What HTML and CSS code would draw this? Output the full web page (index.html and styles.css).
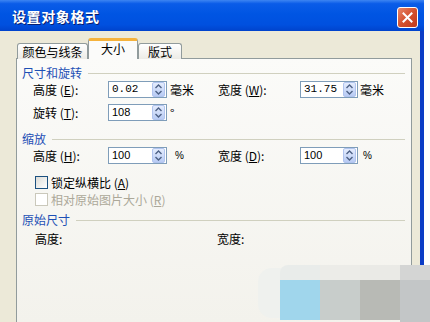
FILE: index.html
```html
<!DOCTYPE html>
<html lang="zh-CN">
<head>
    <meta charset="UTF-8">
    <title>设置对象格式</title>
    <link rel="stylesheet" href="styles.css">
</head>
<body>

    <div class="window">
        <div class="titlebar">
            <span class="title">设置对象格式</span>
            <span class="close">
                <svg width="11" height="11" viewBox="0 0 11 11"><path d="M1.5 1.5 L9.5 9.5 M9.5 1.5 L1.5 9.5" stroke="#fff" stroke-width="2" stroke-linecap="square"/></svg>
            </span>
        </div>

        <div class="content">
            <div class="tabs">
                <div class="tab tab-colors">颜色与线条</div>
                <div class="tab tab-active">大小</div>
                <div class="tab tab-layout">版式</div>
            </div>

            <div class="panel">
                <!-- size and rotation -->
                <div class="group">
                    <span>尺寸和旋转</span><i class="rule"></i>
                </div>
                <div class="row row-first">
                    <span class="lbl">高度 (<u>E</u>):</span>
                    <span class="field"><span class="val mono">0.02</span><span class="spin"><svg width="11" height="13" viewBox="0 0 11 13"><path d="M2.5 5 L5.5 2 L8.5 5 M2.5 8 L5.5 11 L8.5 8" fill="none" stroke="#4d6185" stroke-width="1.4"/></svg></span></span>
                    <span class="unit">毫米</span>
                    <span class="lbl lbl-right">宽度 (<u>W</u>):</span>
                    <span class="field field-right"><span class="val mono">31.75</span><span class="spin"><svg width="11" height="13" viewBox="0 0 11 13"><path d="M2.5 5 L5.5 2 L8.5 5 M2.5 8 L5.5 11 L8.5 8" fill="none" stroke="#4d6185" stroke-width="1.4"/></svg></span></span>
                    <span class="unit unit-right">毫米</span>
                </div>
                <div class="row row-second">
                    <span class="lbl">旋转 (<u>T</u>):</span>
                    <span class="field"><span class="val">108</span><span class="spin"><svg width="11" height="13" viewBox="0 0 11 13"><path d="M2.5 5 L5.5 2 L8.5 5 M2.5 8 L5.5 11 L8.5 8" fill="none" stroke="#4d6185" stroke-width="1.4"/></svg></span></span>
                    <span class="unit">°</span>
                </div>

                <!-- scale -->
                <div class="group group-gap">
                    <span>缩放</span><i class="rule"></i>
                </div>
                <div class="row row-first">
                    <span class="lbl">高度 (<u>H</u>):</span>
                    <span class="field"><span class="val">100</span><span class="spin"><svg width="11" height="13" viewBox="0 0 11 13"><path d="M2.5 5 L5.5 2 L8.5 5 M2.5 8 L5.5 11 L8.5 8" fill="none" stroke="#4d6185" stroke-width="1.4"/></svg></span></span>
                    <span class="unit unit-pct">%</span>
                    <span class="lbl lbl-right">宽度 (<u>D</u>):</span>
                    <span class="field field-right"><span class="val">100</span><span class="spin"><svg width="11" height="13" viewBox="0 0 11 13"><path d="M2.5 5 L5.5 2 L8.5 5 M2.5 8 L5.5 11 L8.5 8" fill="none" stroke="#4d6185" stroke-width="1.4"/></svg></span></span>
                    <span class="unit unit-right unit-pct">%</span>
                </div>
                <div class="check check-first">
                    <span class="box"></span>锁定纵横比 (<u>A</u>)
                </div>
                <div class="check disabled">
                    <span class="box"></span>相对原始图片大小 (<u>R</u>)
                </div>

                <!-- original size -->
                <div class="group group-last">
                    <span>原始尺寸</span><i class="rule"></i>
                </div>
                <div class="row row-orig">
                    <span class="orig-lbl">高度:</span>
                    <span>宽度:</span>
                </div>
            </div>
        </div>
    </div>

    <div class="mosaic">
        <i class="m m1"></i><i class="m m2"></i><i class="m m3"></i><i class="m m4"></i>
        <i class="m m5"></i><i class="m m6"></i><i class="m m7"></i><i class="m m8"></i>
    </div>

</body>
</html>
```

FILE: styles.css
```css
* {
    box-sizing: border-box;
}
body {
    margin: 0;
    width: 430px;
    height: 322px;
    overflow: hidden;
    position: relative;
    background: #fff;
    font-family: "Noto Sans CJK SC", sans-serif;
    font-size: 12px;
    color: #000;
}
u {
    text-decoration: underline;
}
.window {
    width: 424px;
}
.titlebar {
    height: 31px;
    display: flex;
    align-items: flex-start;
    justify-content: space-between;
    padding: 7px 6px 0 12px;
    background: linear-gradient(#3d85f2 0%, #0a5ce8 12%, #0055e3 45%, #0050df 80%, #0043cc 100%);
}
.title {
    color: #fff;
    font-weight: bold;
    font-size: 14px;
    line-height: 18px;
    letter-spacing: 0.6px;
    text-shadow: 1px 1px #0a1e6e;
}
.close {
    width: 21px;
    height: 21px;
    border: 1px solid #fff;
    border-radius: 3px;
    background: linear-gradient(135deg, #e8876a, #d4512f 50%, #c0391c);
    display: flex;
    align-items: center;
    justify-content: center;
}
.content {
    height: 291px;
    background: #ece9d8;
    padding: 7px 8px 0 16px;
    border-right: 4px solid #0b3cc6;
}
.tabs {
    display: flex;
    align-items: flex-end;
    height: 21px;
    padding-left: 1px;
    margin-bottom: -1px;
    position: relative;
    z-index: 1;
}
.tab {
    height: 16px;
    border: 1px solid #919b9c;
    border-bottom: none;
    border-radius: 3px 3px 0 0;
    background: linear-gradient(#fff, #ecebe6);
    text-align: center;
    line-height: 15px;
}
.tab-colors {
    width: 71px;
}
.tab-active {
    width: 50px;
    height: 21px;
    border-top: 3px solid #f5b23c;
    background: #fbfbfa;
    line-height: 15px;
}
.tab-layout {
    width: 44px;
}
.panel {
    height: 264px;
    border: 1px solid #919b9c;
    border-bottom: none;
    background: linear-gradient(#fbfbf9, #f3f2ec);
    padding-top: 7px;
}
.group {
    display: flex;
    align-items: center;
    height: 14px;
    line-height: 14px;
    padding-left: 5px;
    color: #1d4fb5;
}
.rule {
    flex: 1;
    height: 1px;
    background: #d0d0bf;
    margin: 0 6px 0 6px;
}
.group-gap {
    margin-top: 11px;
}
.group-last {
    margin-top: 6px;
}
.row {
    display: flex;
    align-items: center;
    height: 17px;
    padding-left: 16px;
    line-height: 17px;
}
.row-first {
    margin-top: 1px;
}
.row-second {
    margin-top: 6px;
}
.lbl {
    width: 75px;
}
.lbl-right {
    width: 82px;
}
.field {
    width: 59px;
    height: 17px;
    border: 1px solid #7f9db9;
    background: #fff;
    display: flex;
    align-items: center;
    justify-content: space-between;
    padding: 0 1px 0 3px;
}
.field-right {
    width: 58px;
}
.val {
    font-family: "Liberation Sans", sans-serif;
    font-size: 11px;
}
.mono {
    font-family: "Liberation Mono", monospace;
}
.spin {
    width: 13px;
    height: 15px;
    border: 1px solid #b1c4ee;
    border-radius: 2px;
    background: linear-gradient(#e4ecfd, #b8cbf4);
    display: flex;
}
.unit {
    width: 51px;
    padding-left: 3px;
}
.unit-right {
    width: auto;
    padding-left: 2px;
}
.unit-pct {
    width: 51px;
    padding-left: 8px;
    font-family: "Liberation Sans", sans-serif;
    font-size: 10px;
}
.unit-right.unit-pct {
    padding-left: 5px;
}
.check {
    display: flex;
    align-items: center;
    height: 16px;
    padding-left: 18px;
}
.check-first {
    margin-top: 10px;
}
.box {
    width: 13px;
    height: 13px;
    border: 1px solid #1c5180;
    background: linear-gradient(135deg, #dcdcd7, #fff);
    margin-right: 3px;
}
.disabled {
    margin-top: 1px;
    color: #aca899;
}
.disabled .box {
    border-color: #cac8bb;
    background: #fff;
}
.row-orig {
    margin-top: 5px;
    height: 14px;
    line-height: 14px;
    padding-left: 18px;
}
.orig-lbl {
    width: 182px;
}
.mosaic {
    position: absolute;
    left: 280px;
    top: 265px;
    display: grid;
    grid-template-columns: 40px 40px 40px 30px;
    grid-template-rows: 15px 40px 2px;
}
.mosaic::before {
    content: "";
    position: absolute;
    left: -22px;
    top: 3px;
    width: 30px;
    height: 50px;
    border-radius: 14px 0 0 14px;
    background: #eff1ee;
}
.m {
    display: block;
    position: relative;
}
.m1 { background: #e9ecea; border-top-left-radius: 8px; }
.m2 { background: #ecece8; }
.m3 { background: #eaeae6; }
.m4 { background: #d4d5d4; }
.m5 { background: #a0d6ec; }
.m6 { background: #c8cdcb; }
.m7 { background: #b8bab5; }
.m8 { background: #c3c6c7; grid-row: span 2; }
```
